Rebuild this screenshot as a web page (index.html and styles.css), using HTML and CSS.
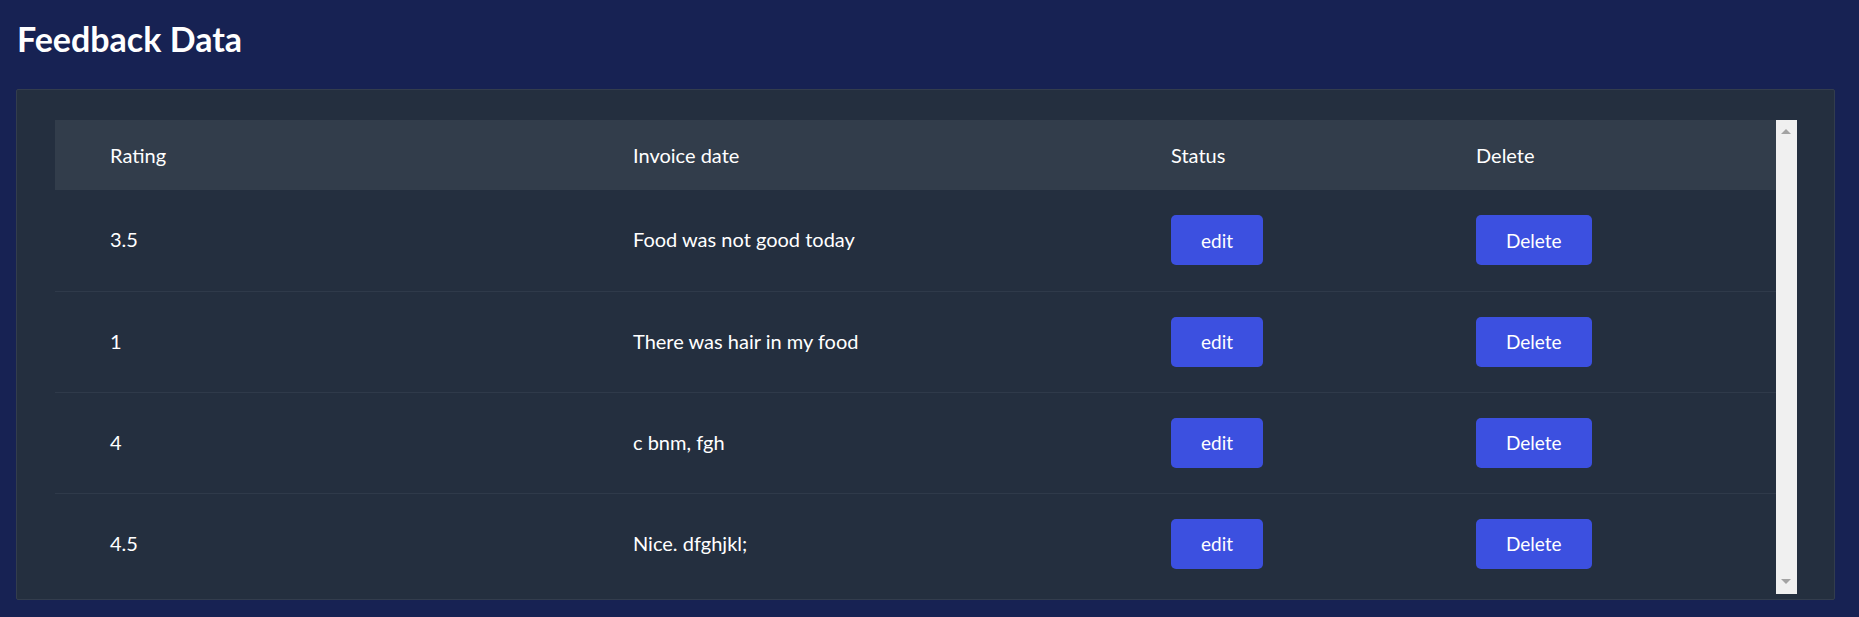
FILE: index.html
```html
<!DOCTYPE html>
<html lang="en">
<head>
<meta charset="utf-8">
<title>Feedback Data</title>
<link rel="stylesheet" href="styles.css">
</head>
<body>
<main class="page">
  <h1 class="title">Feedback Data</h1>
  <section class="card">
    <div class="table-wrap">
      <table class="data-table">
        <colgroup>
          <col class="c-rating">
          <col class="c-date">
          <col class="c-status">
          <col class="c-delete">
        </colgroup>
        <thead>
          <tr>
            <th>Rating</th>
            <th>Invoice date</th>
            <th>Status</th>
            <th>Delete</th>
          </tr>
        </thead>
        <tbody>
          <tr>
            <td>3.5</td>
            <td>Food was not good today</td>
            <td><button class="btn">edit</button></td>
            <td><button class="btn">Delete</button></td>
          </tr>
          <tr>
            <td>1</td>
            <td>There was hair in my food</td>
            <td><button class="btn">edit</button></td>
            <td><button class="btn">Delete</button></td>
          </tr>
          <tr>
            <td>4</td>
            <td>c bnm, fgh</td>
            <td><button class="btn">edit</button></td>
            <td><button class="btn">Delete</button></td>
          </tr>
          <tr>
            <td>4.5</td>
            <td>Nice. dfghjkl;</td>
            <td><button class="btn">edit</button></td>
            <td><button class="btn">Delete</button></td>
          </tr>
        </tbody>
      </table>
      <div class="scrollbar">
        <span class="arrow arrow-up"></span>
        <span class="arrow arrow-down"></span>
      </div>
    </div>
  </section>
</main>
</body>
</html>
```

FILE: styles.css
```css
* { box-sizing: border-box; }

html, body {
  margin: 0;
  padding: 0;
}

body {
  background: #172253;
  font-family: Lato, "Open Sans", sans-serif;
  color: #ffffff;
  width: 1859px;
  height: 617px;
  overflow: hidden;
}

.page {
  padding: 19px 24px 0 16px;
}

.title {
  margin: 0 0 30px 1px;
  font-size: 34px;
  line-height: 40px;
  font-weight: 700;
  color: #ffffff;
}

.card {
  background: #242f3f;
  border: 1px solid #333d4d;
  border-radius: 2px;
  height: 511px;
  padding: 30px 37px 0 38px;
  overflow: hidden;
}

.table-wrap {
  display: flex;
  height: 474px;
  overflow: hidden;
}

.data-table {
  flex: 1;
  border-collapse: collapse;
  table-layout: fixed;
  align-self: flex-start;
}

.c-rating { width: 523px; }
.c-date { width: 538px; }
.c-status { width: 305px; }

.data-table th {
  background: #323d4b;
  height: 70px;
  padding: 0 0 0 55px;
  text-align: left;
  font-weight: 400;
  font-size: 20px;
  color: #ffffff;
}

.data-table td {
  height: 101px;
  padding: 0 0 2px 55px;
  border-bottom: 1px solid #2f3a4a;
  font-size: 20px;
  color: #ffffff;
}

.btn {
  font-family: Lato, "Open Sans", sans-serif;
  font-size: 19px;
  color: #ffffff;
  background: #3c50e0;
  border: none;
  border-radius: 5px;
  height: 50px;
  padding: 0 30px;
  margin-top: 2px;
}

.scrollbar {
  position: relative;
  flex: 0 0 21px;
  background: #f0f0f0;
}

.arrow {
  position: absolute;
  left: 5px;
  width: 0;
  height: 0;
  border-left: 5px solid transparent;
  border-right: 5px solid transparent;
}

.arrow-up {
  top: 9px;
  border-bottom: 5px solid #a3a3a3;
}

.arrow-down {
  bottom: 10px;
  border-top: 5px solid #a3a3a3;
}
```
